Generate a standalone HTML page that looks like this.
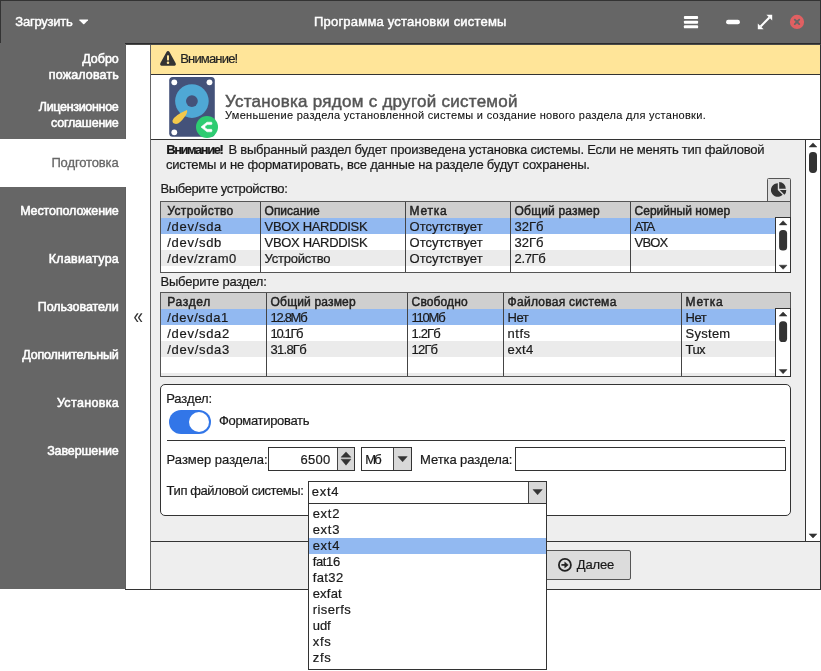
<!DOCTYPE html>
<html lang="ru"><head><meta charset="utf-8"><title>Программа установки системы</title>
<style>
html,body{margin:0;padding:0;background:#fff;}
body{width:821px;height:671px;position:relative;overflow:hidden;font-family:"Liberation Sans",sans-serif;}
#win{position:absolute;left:0;top:0;width:821px;height:671px;will-change:transform;}
.b{position:absolute;display:block;}
.t{position:absolute;white-space:pre;line-height:normal;-webkit-text-stroke:0.2px currentColor;}
</style></head><body>
<div id="win">
<div class="b " style="left:0px;top:0px;width:821px;height:44px;background:#666666;"></div>
<div class="b " style="left:0px;top:0px;width:821px;height:1px;background:#333333;"></div>
<div class="b " style="left:0px;top:0px;width:1px;height:43px;background:#333333;"></div>
<div class="b " style="left:820px;top:0px;width:1px;height:590px;background:#333333;"></div>
<span class="t " style="left:15.30px;top:14.00px;font-size:13px;color:#fff;letter-spacing:-0.232px;-webkit-text-stroke:0.45px #fff;">Загрузить</span>
<svg class="b" style="left:79px;top:19px" width="10" height="6" viewBox="0 0 10 6"><path d="M0.6 0.4 H8.8 Q9.4 0.6 9 1.2 L5.3 5 Q4.7 5.5 4.1 5 L0.4 1.2 Q0 0.6 0.6 0.4Z" fill="#fff"/></svg>
<span class="t " style="left:314.00px;top:14.00px;font-size:13px;color:#fff;letter-spacing:0.207px;-webkit-text-stroke:0.45px #fff;">Программа установки системы</span>
<svg class="b" style="left:683px;top:15px" width="16" height="14" viewBox="0 0 16 14"><g fill="#fff"><rect x="0.9" y="1" width="14.2" height="3" rx="0.9"/><rect x="0.9" y="5.7" width="14.2" height="3" rx="0.9"/><rect x="0.9" y="10.3" width="14.2" height="3" rx="0.9"/></g></svg>
<svg class="b" style="left:725px;top:18px" width="16" height="8" viewBox="0 0 16 8"><rect x="1.1" y="1.7" width="13.8" height="4.5" rx="2" fill="#fff"/></svg>
<svg class="b" style="left:757px;top:14px" width="16" height="16" viewBox="0 0 16 16"><g fill="#fff"><path d="M9.4 0.8 H15.2 V6.6 Z"/><path d="M6.6 15.2 H0.8 V9.4 Z"/><path d="M3.6 12.4 L12.4 3.6" stroke="#fff" stroke-width="2.1"/></g></svg>
<svg class="b" style="left:789px;top:14px" width="16" height="16" viewBox="0 0 16 16"><circle cx="8" cy="7.9" r="7.1" fill="#e06062"/><path d="M5.8 5.7 L10.2 10.1 M10.2 5.7 L5.8 10.1" stroke="#666" stroke-width="1.9" stroke-linecap="round"/></svg>
<div class="b " style="left:0px;top:44px;width:126px;height:545px;background:#666666;"></div>
<div class="b " style="left:125px;top:45px;width:1px;height:544px;background:#606060;"></div>
<div class="b " style="left:0px;top:139px;width:126px;height:48px;background:#fff;"></div>
<span class="t " style="left:82.30px;top:52.00px;font-size:12.5px;color:#fff;letter-spacing:-0.031px;-webkit-text-stroke:0.55px #fff;">Добро</span>
<span class="t " style="left:48.80px;top:67.50px;font-size:12.5px;color:#fff;letter-spacing:0.146px;-webkit-text-stroke:0.55px #fff;">пожаловать</span>
<span class="t " style="left:38.80px;top:99.50px;font-size:12.5px;color:#fff;letter-spacing:-0.314px;-webkit-text-stroke:0.55px #fff;">Лицензионное</span>
<span class="t " style="left:51.00px;top:115.50px;font-size:12.5px;color:#fff;letter-spacing:-0.211px;-webkit-text-stroke:0.55px #fff;">соглашение</span>
<span class="t " style="left:51.40px;top:155.00px;font-size:13px;color:#666;letter-spacing:-0.126px;-webkit-text-stroke:0.3px #666;">Подготовка</span>
<span class="t " style="left:20.20px;top:204.00px;font-size:12.5px;color:#fff;letter-spacing:-0.117px;-webkit-text-stroke:0.55px #fff;">Местоположение</span>
<span class="t " style="left:48.80px;top:252.00px;font-size:12.5px;color:#fff;letter-spacing:0.255px;-webkit-text-stroke:0.55px #fff;">Клавиатура</span>
<span class="t " style="left:37.70px;top:300.00px;font-size:12.5px;color:#fff;letter-spacing:-0.043px;-webkit-text-stroke:0.55px #fff;">Пользователи</span>
<span class="t " style="left:22.30px;top:348.00px;font-size:12.5px;color:#fff;letter-spacing:-0.191px;-webkit-text-stroke:0.55px #fff;">Дополнительный</span>
<span class="t " style="left:56.90px;top:396.00px;font-size:12.5px;color:#fff;letter-spacing:0.353px;-webkit-text-stroke:0.55px #fff;">Установка</span>
<span class="t " style="left:47.20px;top:444.00px;font-size:12.5px;color:#fff;letter-spacing:-0.126px;-webkit-text-stroke:0.55px #fff;">Завершение</span>
<div class="b " style="left:125px;top:43px;width:696px;height:1px;background:#2a2a2c;"></div>
<div class="b " style="left:126px;top:44px;width:695px;height:1px;background:#4a4a48;"></div>
<span class="t" style="left:133.6px;top:306.8px;font-size:17px;color:#333;-webkit-text-stroke:0;transform:scale(1.0,1.32);transform-origin:0 50%;">«</span>
<div class="b " style="left:150px;top:45px;width:1px;height:545px;background:#666;"></div>
<div class="b " style="left:151px;top:45px;width:669px;height:29px;background:#ffe599;"></div>
<div class="b " style="left:151px;top:74px;width:669px;height:1px;background:#333333;"></div>
<svg class="b" style="left:159px;top:50px" width="18" height="17" viewBox="0 0 18 17"><path d="M9 0.9 Q10 0.9 10.5 1.9 L16.7 13.2 Q17.5 15.4 15.6 15.7 H2.4 Q0.5 15.4 1.3 13.2 L7.5 1.9 Q8 0.9 9 0.9Z" fill="#333"/><rect x="8" y="5.2" width="2" height="5.2" rx="0.6" fill="#ffe599"/><circle cx="9" cy="12.8" r="1.25" fill="#ffe599"/></svg>
<span class="t " style="left:180.20px;top:50.70px;font-size:13px;color:#222;letter-spacing:-0.820px;">Внимание!</span>
<div class="b " style="left:151px;top:139px;width:669px;height:1px;background:#333333;"></div>
<span class="t " style="left:225.00px;top:91.50px;font-size:17px;color:#555;letter-spacing:0.269px;-webkit-text-stroke:0.45px #555;">Установка рядом с другой системой</span>
<span class="t " style="left:225.00px;top:109.30px;font-size:11px;color:#111;letter-spacing:0.304px;-webkit-text-stroke:0.1px #111;">Уменьшение раздела установленной системы и создание нового раздела для установки.</span>
<svg class="b" style="left:168px;top:76px" width="52" height="64" viewBox="0 0 52 64">
<rect x="1.2" y="1" width="45.6" height="59.8" rx="3.5" fill="#44527a"/>
<circle cx="23.9" cy="25.1" r="16.8" fill="#4fa8d5"/>
<circle cx="23.9" cy="25.1" r="5.9" fill="#44527a"/>
<circle cx="6.3" cy="6.3" r="2.9" fill="#fff"/><circle cx="41.5" cy="6.3" r="2.9" fill="#fff"/><circle cx="6.3" cy="56.3" r="2.9" fill="#fff"/>
<path d="M19 34 Q20 36.5 16.5 41 Q12 47.5 8 48 Q4 47.5 4.5 44.5 Q6 39.5 19 34Z" fill="#f2c84b"/>
<circle cx="39" cy="51" r="11" fill="#2ecc71"/>
<path d="M33 51 L38 47 L39 46.2 H43.6 Q44.4 47.4 43.6 48.6 H39.5 L37 50 V52 L39.5 53.3 H43.6 Q44.4 54.5 43.6 55.8 H39 L38 55 Z" fill="#fff" stroke="#fff" stroke-width="0.6" stroke-linejoin="round"/>
</svg>
<div class="b " style="left:151px;top:140px;width:654px;height:401px;background:#eeeeee;"></div>
<div class="b " style="left:805px;top:140px;width:1px;height:401px;background:#333333;"></div>
<div class="b " style="left:806px;top:140px;width:14px;height:401px;background:#fff;"></div>
<div class="b " style="left:151px;top:541px;width:669px;height:1px;background:#333333;"></div>
<div class="b " style="left:151px;top:542px;width:669px;height:47px;background:#eeeeee;"></div>
<div class="b " style="left:125px;top:589px;width:696px;height:1px;background:#333333;"></div>
<svg class="b" style="left:806px;top:140px" width="14" height="401" viewBox="0 0 14 401"><path d="M3.1 7.000000000000005 L7 2.9000000000000057 L10.9 7.000000000000005Z" fill="#333" stroke="#333" stroke-width="0.5" stroke-linejoin="round"/><rect x="3" y="11.900000000000006" width="8" height="21.0" rx="3.6" fill="#333"/><path d="M3.1 393.9 L7 398 L10.9 393.9Z" fill="#333" stroke="#333" stroke-width="0.5" stroke-linejoin="round"/></svg>
<span class="t " style="left:166.30px;top:141.50px;font-size:13px;color:#1a1a1a;letter-spacing:-1.477px;font-weight:bold;">Внимание!</span>
<span class="t " style="left:228.50px;top:141.50px;font-size:13px;color:#1a1a1a;letter-spacing:-0.236px;">В выбранный раздел будет произведена установка системы. Если не менять тип файловой</span>
<span class="t " style="left:166.00px;top:157.20px;font-size:13px;color:#1a1a1a;letter-spacing:-0.198px;">системы и не форматировать, все данные на разделе будут сохранены.</span>
<span class="t " style="left:160.40px;top:181.00px;font-size:13px;color:#1a1a1a;letter-spacing:-0.359px;">Выберите устройство:</span>
<div class="b " style="left:767px;top:178px;width:24px;height:24px;background:#dedede;border:1px solid #555;box-sizing:border-box;border-radius:1.5px 1.5px 0 0;"></div>
<svg class="b" style="left:771px;top:182px" width="16" height="16" viewBox="0 0 16 16"><path d="M6.8 1.15 A6.85 6.85 0 1 0 11.64 12.84 L6.8 8Z" fill="#333"/><path d="M8.2 6.65 V0.05 A6.6 6.6 0 0 1 14.8 6.65Z" fill="#333"/><path d="M8.8 8 H15.3 A6.6 6.6 0 0 1 13.45 12.65Z" fill="#333"/></svg>
<div class="b " style="left:160px;top:201px;width:631px;height:72px;background:#fff;border:1px solid #555;box-sizing:border-box;"></div>
<div class="b " style="left:161px;top:202px;width:629px;height:16px;background:#cfcfcf;"></div>
<div class="b " style="left:161px;top:218px;width:614px;height:16px;background:#92b9f1;"></div>
<div class="b " style="left:161px;top:234px;width:614px;height:16px;background:#fff;"></div>
<div class="b " style="left:161px;top:250px;width:614px;height:16px;background:#ebebeb;"></div>
<div class="b " style="left:161px;top:266px;width:614px;height:6px;background:#fff;"></div>
<div class="b " style="left:260px;top:202px;width:1px;height:70px;background:#444;"></div>
<div class="b " style="left:405px;top:202px;width:1px;height:70px;background:#444;"></div>
<div class="b " style="left:510px;top:202px;width:1px;height:70px;background:#444;"></div>
<div class="b " style="left:630px;top:202px;width:1px;height:70px;background:#444;"></div>
<div class="b " style="left:775px;top:217px;width:16px;height:56px;background:#fff;border:1px solid #333;box-sizing:border-box;"></div>
<span class="t " style="left:167.30px;top:203.50px;font-size:12px;color:#222;letter-spacing:0.358px;-webkit-text-stroke:0.45px #222;">Устройство</span>
<span class="t " style="left:264.60px;top:203.50px;font-size:12px;color:#222;letter-spacing:-0.029px;-webkit-text-stroke:0.45px #222;">Описание</span>
<span class="t " style="left:409.60px;top:203.50px;font-size:12px;color:#222;letter-spacing:0.723px;-webkit-text-stroke:0.45px #222;">Метка</span>
<span class="t " style="left:514.60px;top:203.50px;font-size:12px;color:#222;letter-spacing:0.172px;-webkit-text-stroke:0.45px #222;">Общий размер</span>
<span class="t " style="left:634.60px;top:203.50px;font-size:12px;color:#222;letter-spacing:-0.007px;-webkit-text-stroke:0.45px #222;">Серийный номер</span>
<span class="t " style="left:167.30px;top:218.70px;font-size:13px;color:#1a1a1a;letter-spacing:0.692px;">/dev/sda</span>
<span class="t " style="left:264.60px;top:218.70px;font-size:13px;color:#1a1a1a;letter-spacing:-0.327px;">VBOX HARDDISK</span>
<span class="t " style="left:409.60px;top:218.70px;font-size:13px;color:#1a1a1a;letter-spacing:0.008px;">Отсутствует</span>
<span class="t " style="left:514.60px;top:218.70px;font-size:13px;color:#1a1a1a;letter-spacing:0.010px;">32Гб</span>
<span class="t " style="left:634.60px;top:218.70px;font-size:13px;color:#1a1a1a;letter-spacing:-1.422px;">ATA</span>
<span class="t " style="left:167.30px;top:234.70px;font-size:13px;color:#1a1a1a;letter-spacing:0.692px;">/dev/sdb</span>
<span class="t " style="left:264.60px;top:234.70px;font-size:13px;color:#1a1a1a;letter-spacing:-0.327px;">VBOX HARDDISK</span>
<span class="t " style="left:409.60px;top:234.70px;font-size:13px;color:#1a1a1a;letter-spacing:0.008px;">Отсутствует</span>
<span class="t " style="left:514.60px;top:234.70px;font-size:13px;color:#1a1a1a;letter-spacing:0.010px;">32Гб</span>
<span class="t " style="left:634.60px;top:234.70px;font-size:13px;color:#1a1a1a;letter-spacing:-0.875px;">VBOX</span>
<span class="t " style="left:167.30px;top:250.70px;font-size:13px;color:#1a1a1a;letter-spacing:0.521px;">/dev/zram0</span>
<span class="t " style="left:264.60px;top:250.70px;font-size:13px;color:#1a1a1a;letter-spacing:-0.226px;">Устройство</span>
<span class="t " style="left:409.60px;top:250.70px;font-size:13px;color:#1a1a1a;letter-spacing:0.008px;">Отсутствует</span>
<span class="t " style="left:514.60px;top:250.70px;font-size:13px;color:#1a1a1a;letter-spacing:-0.395px;">2.7Гб</span>
<svg class="b" style="left:776px;top:218px" width="14" height="54" viewBox="0 0 14 54"><path d="M3.1999999999999997 6.900000000000011 L7.1 2.8000000000000114 L11.0 6.900000000000011Z" fill="#333" stroke="#333" stroke-width="0.5" stroke-linejoin="round"/><rect x="3.0999999999999996" y="12" width="8" height="20.599999999999994" rx="3.6" fill="#333"/><path d="M3.1999999999999997 47.20000000000001 L7.1 51.30000000000001 L11.0 47.20000000000001Z" fill="#333" stroke="#333" stroke-width="0.5" stroke-linejoin="round"/></svg>
<span class="t " style="left:160.40px;top:274.40px;font-size:13px;color:#1a1a1a;letter-spacing:-0.185px;">Выберите раздел:</span>
<div class="b " style="left:160px;top:292px;width:631px;height:85px;background:#fff;border:1px solid #555;box-sizing:border-box;"></div>
<div class="b " style="left:161px;top:293px;width:629px;height:16px;background:#cfcfcf;"></div>
<div class="b " style="left:161px;top:309px;width:614px;height:16px;background:#92b9f1;"></div>
<div class="b " style="left:161px;top:325px;width:614px;height:16px;background:#fff;"></div>
<div class="b " style="left:161px;top:341px;width:614px;height:16px;background:#ebebeb;"></div>
<div class="b " style="left:161px;top:357px;width:614px;height:16px;background:#fff;"></div>
<div class="b " style="left:161px;top:373px;width:614px;height:3px;background:#ebebeb;"></div>
<div class="b " style="left:266px;top:293px;width:1px;height:83px;background:#444;"></div>
<div class="b " style="left:407px;top:293px;width:1px;height:83px;background:#444;"></div>
<div class="b " style="left:503px;top:293px;width:1px;height:83px;background:#444;"></div>
<div class="b " style="left:681px;top:293px;width:1px;height:83px;background:#444;"></div>
<div class="b " style="left:775px;top:308px;width:16px;height:69px;background:#fff;border:1px solid #333;box-sizing:border-box;"></div>
<span class="t " style="left:167.30px;top:294.50px;font-size:12px;color:#222;letter-spacing:0.669px;-webkit-text-stroke:0.45px #222;">Раздел</span>
<span class="t " style="left:270.60px;top:294.50px;font-size:12px;color:#222;letter-spacing:0.172px;-webkit-text-stroke:0.45px #222;">Общий размер</span>
<span class="t " style="left:411.60px;top:294.50px;font-size:12px;color:#222;letter-spacing:0.121px;-webkit-text-stroke:0.45px #222;">Свободно</span>
<span class="t " style="left:507.60px;top:294.50px;font-size:12px;color:#222;letter-spacing:0.266px;-webkit-text-stroke:0.45px #222;">Файловая система</span>
<span class="t " style="left:685.60px;top:294.50px;font-size:12px;color:#222;letter-spacing:0.723px;-webkit-text-stroke:0.45px #222;">Метка</span>
<span class="t " style="left:167.30px;top:309.70px;font-size:13px;color:#1a1a1a;letter-spacing:0.576px;">/dev/sda1</span>
<span class="t " style="left:270.60px;top:309.70px;font-size:13px;color:#1a1a1a;letter-spacing:-1.319px;">12.8Мб</span>
<span class="t " style="left:411.60px;top:309.70px;font-size:13px;color:#1a1a1a;letter-spacing:-1.254px;">110Мб</span>
<span class="t " style="left:507.60px;top:309.70px;font-size:13px;color:#1a1a1a;letter-spacing:-0.570px;">Нет</span>
<span class="t " style="left:685.60px;top:309.70px;font-size:13px;color:#1a1a1a;letter-spacing:-0.570px;">Нет</span>
<span class="t " style="left:167.30px;top:325.70px;font-size:13px;color:#1a1a1a;letter-spacing:0.701px;">/dev/sda2</span>
<span class="t " style="left:270.60px;top:325.70px;font-size:13px;color:#1a1a1a;letter-spacing:-1.363px;">10.1Гб</span>
<span class="t " style="left:411.60px;top:325.70px;font-size:13px;color:#1a1a1a;letter-spacing:-0.895px;">1.2Гб</span>
<span class="t " style="left:507.60px;top:325.70px;font-size:13px;color:#1a1a1a;letter-spacing:0.516px;">ntfs</span>
<span class="t " style="left:685.60px;top:325.70px;font-size:13px;color:#1a1a1a;letter-spacing:0.251px;">System</span>
<span class="t " style="left:167.30px;top:341.70px;font-size:13px;color:#1a1a1a;letter-spacing:0.701px;">/dev/sda3</span>
<span class="t " style="left:270.60px;top:341.70px;font-size:13px;color:#1a1a1a;letter-spacing:-0.762px;">31.8Гб</span>
<span class="t " style="left:411.60px;top:341.70px;font-size:13px;color:#1a1a1a;letter-spacing:-0.823px;">12Гб</span>
<span class="t " style="left:507.60px;top:341.70px;font-size:13px;color:#1a1a1a;letter-spacing:0.374px;">ext4</span>
<span class="t " style="left:685.60px;top:341.70px;font-size:13px;color:#1a1a1a;letter-spacing:-0.594px;">Tux</span>
<svg class="b" style="left:776px;top:309px" width="14" height="67" viewBox="0 0 14 67"><path d="M3.1999999999999997 7.1 L7.1 3 L11.0 7.1Z" fill="#333" stroke="#333" stroke-width="0.5" stroke-linejoin="round"/><rect x="3.0999999999999996" y="12.199999999999989" width="8" height="20.80000000000001" rx="3.6" fill="#333"/><path d="M3.1999999999999997 60.59999999999999 L7.1 64.69999999999999 L11.0 60.59999999999999Z" fill="#333" stroke="#333" stroke-width="0.5" stroke-linejoin="round"/></svg>
<div class="b " style="left:160px;top:384px;width:631px;height:132px;background:#fff;border:1px solid #333;box-sizing:border-box;border-radius:5px;"></div>
<span class="t " style="left:166.20px;top:391.00px;font-size:13px;color:#1a1a1a;letter-spacing:-0.094px;">Раздел:</span>
<div class="b " style="left:168.8px;top:409.8px;width:42.2px;height:24.4px;background:#3276e8;border-radius:12.2px;"></div>
<div class="b " style="left:188.6px;top:411.8px;width:20.4px;height:20.4px;background:#fff;border-radius:10.2px;"></div>
<span class="t " style="left:219.00px;top:413.00px;font-size:13px;color:#1a1a1a;letter-spacing:-0.323px;">Форматировать</span>
<div class="b " style="left:167px;top:440px;width:618px;height:1px;background:#333;"></div>
<span class="t " style="left:166.60px;top:451.60px;font-size:13px;color:#1a1a1a;letter-spacing:-0.007px;">Размер раздела:</span>
<div class="b " style="left:268px;top:447px;width:87px;height:24px;background:#fff;border:1px solid #333;box-sizing:border-box;"></div>
<span class="t " style="left:300.50px;top:451.60px;font-size:13px;color:#1a1a1a;letter-spacing:0.288px;">6500</span>
<div class="b " style="left:337px;top:448px;width:17px;height:22px;background:#d8d8d8;border-left:1px solid #444;box-sizing:border-box;"></div>
<svg class="b" style="left:339px;top:450px" width="14" height="18" viewBox="0 0 14 18"><path d="M2.1 7.2 L7 1.9 L11.9 7.2Z M2.1 9.2 L7 15.2 L11.9 9.2Z" fill="#333" stroke="#333" stroke-width="0.5" stroke-linejoin="round"/></svg>
<div class="b " style="left:361px;top:447px;width:51px;height:24px;background:#fff;border:1px solid #333;box-sizing:border-box;"></div>
<span class="t " style="left:365.30px;top:451.60px;font-size:13px;color:#1a1a1a;letter-spacing:-1.781px;">Мб</span>
<div class="b " style="left:393px;top:448px;width:18px;height:22px;background:#d8d8d8;border-left:1px solid #444;box-sizing:border-box;"></div>
<svg class="b" style="left:396px;top:455px" width="13" height="8" viewBox="0 0 13 8"><path d="M2 1.6 L6.6 6.8 L11.2 1.6Z" fill="#333" stroke="#333" stroke-width="0.5" stroke-linejoin="round"/></svg>
<span class="t " style="left:420.00px;top:451.60px;font-size:13px;color:#1a1a1a;letter-spacing:-0.071px;">Метка раздела:</span>
<div class="b " style="left:515px;top:447px;width:271px;height:24px;background:#fff;border:1px solid #333;box-sizing:border-box;"></div>
<span class="t " style="left:166.60px;top:483.30px;font-size:13px;color:#1a1a1a;letter-spacing:-0.411px;">Тип файловой системы:</span>
<div class="b " style="left:308px;top:481px;width:239px;height:23px;background:#fff;border:1px solid #333;box-sizing:border-box;"></div>
<span class="t " style="left:311.80px;top:484.00px;font-size:13px;color:#1a1a1a;letter-spacing:0.707px;">ext4</span>
<div class="b " style="left:528px;top:482px;width:18px;height:21px;background:#d8d8d8;border-left:1px solid #444;box-sizing:border-box;"></div>
<svg class="b" style="left:531px;top:488px" width="13" height="8" viewBox="0 0 13 8"><path d="M2 1.6 L6.6 6.8 L11.2 1.6Z" fill="#333" stroke="#333" stroke-width="0.5" stroke-linejoin="round"/></svg>
<div class="b " style="left:540px;top:550px;width:91px;height:30px;background:#dcdcdc;border:1px solid #555;box-sizing:border-box;border-radius:2px;"></div>
<svg class="b" style="left:557px;top:557px" width="16" height="16" viewBox="0 0 16 16"><circle cx="7.9" cy="7.9" r="6" fill="none" stroke="#222" stroke-width="1.8"/><path d="M4.4 7.9 H8.5" stroke="#222" stroke-width="1.7"/><path d="M7.7 4.9 L11.3 7.9 L7.7 10.9Z" fill="#222" stroke="#222" stroke-width="0.4" stroke-linejoin="round"/></svg>
<span class="t " style="left:576.80px;top:557.00px;font-size:13px;color:#1a1a1a;letter-spacing:-0.145px;">Далее</span>
<div class="b " style="left:308px;top:503px;width:239px;height:167px;background:#fff;border:1px solid #333;box-sizing:border-box;"></div>
<div class="b " style="left:309px;top:538px;width:237px;height:16px;background:#92b9f1;"></div>
<span class="t " style="left:312.70px;top:506.00px;font-size:13px;color:#1a1a1a;letter-spacing:0.707px;">ext2</span>
<span class="t " style="left:312.70px;top:522.00px;font-size:13px;color:#1a1a1a;letter-spacing:0.707px;">ext3</span>
<span class="t " style="left:312.70px;top:538.00px;font-size:13px;color:#1a1a1a;letter-spacing:0.707px;">ext4</span>
<span class="t " style="left:312.70px;top:554.00px;font-size:13px;color:#1a1a1a;letter-spacing:-0.355px;">fat16</span>
<span class="t " style="left:312.70px;top:570.00px;font-size:13px;color:#1a1a1a;letter-spacing:0.395px;">fat32</span>
<span class="t " style="left:312.70px;top:586.00px;font-size:13px;color:#1a1a1a;letter-spacing:0.203px;">exfat</span>
<span class="t " style="left:312.70px;top:602.00px;font-size:13px;color:#1a1a1a;letter-spacing:0.435px;">riserfs</span>
<span class="t " style="left:312.70px;top:618.00px;font-size:13px;color:#1a1a1a;letter-spacing:-0.039px;">udf</span>
<span class="t " style="left:312.70px;top:634.00px;font-size:13px;color:#1a1a1a;letter-spacing:0.695px;">xfs</span>
<span class="t " style="left:312.70px;top:650.00px;font-size:13px;color:#1a1a1a;letter-spacing:0.695px;">zfs</span>
</div>
</body></html>
